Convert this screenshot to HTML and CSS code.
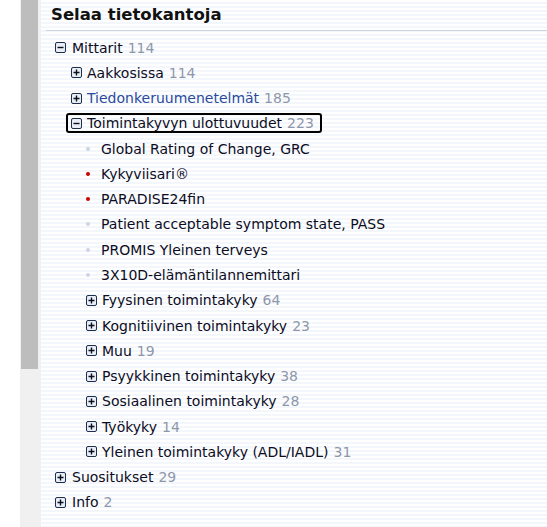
FILE: index.html
```html
<!DOCTYPE html>
<html lang="fi">
<head>
<meta charset="utf-8">
<title>Selaa tietokantoja</title>
<link rel="stylesheet" href="styles.css">
</head>
<body>
<div class="page">
  <div class="gutter"></div>
  <div class="rail"><div class="thumb"></div></div>
  <main class="panel">
    <div class="head"><h2 class="title">Selaa tietokantoja</h2></div>
    <ul class="tree">
      <li class="row lv0"><svg class="tog" viewBox="0 0 11 11"><rect x="0.5" y="0.5" width="10" height="10" rx="1.5"/><path d="M2.5 5.5h6"/></svg><span class="lbl">Mittarit</span><span class="cnt">114</span></li>
      <li class="row lv1"><svg class="tog" viewBox="0 0 11 11"><rect x="0.5" y="0.5" width="10" height="10" rx="1.5"/><path d="M2.5 5.5h6M5.5 2.5v6"/></svg><span class="lbl">Aakkosissa</span><span class="cnt">114</span></li>
      <li class="row lv1"><svg class="tog" viewBox="0 0 11 11"><rect x="0.5" y="0.5" width="10" height="10" rx="1.5"/><path d="M2.5 5.5h6M5.5 2.5v6"/></svg><span class="lbl visited">Tiedonkeruumenetelmät</span><span class="cnt">185</span></li>
      <li class="row lv1"><span class="focus"><svg class="tog" viewBox="0 0 11 11"><rect x="0.5" y="0.5" width="10" height="10" rx="1.5"/><path d="M2.5 5.5h6"/></svg><span class="lbl">Toimintakyvyn ulottuvuudet</span><span class="cnt">223</span></span></li>
      <li class="row lv2 leaf"><span class="dot"></span><span class="lbl">Global Rating of Change, GRC</span></li>
      <li class="row lv2 leaf"><span class="dot red"></span><span class="lbl">Kykyviisari®</span></li>
      <li class="row lv2 leaf"><span class="dot red"></span><span class="lbl">PARADISE24fin</span></li>
      <li class="row lv2 leaf"><span class="dot"></span><span class="lbl">Patient acceptable symptom state, PASS</span></li>
      <li class="row lv2 leaf"><span class="dot"></span><span class="lbl">PROMIS Yleinen terveys</span></li>
      <li class="row lv2 leaf"><span class="dot"></span><span class="lbl">3X10D-elämäntilannemittari</span></li>
      <li class="row lv2"><svg class="tog" viewBox="0 0 11 11"><rect x="0.5" y="0.5" width="10" height="10" rx="1.5"/><path d="M2.5 5.5h6M5.5 2.5v6"/></svg><span class="lbl">Fyysinen toimintakyky</span><span class="cnt">64</span></li>
      <li class="row lv2"><svg class="tog" viewBox="0 0 11 11"><rect x="0.5" y="0.5" width="10" height="10" rx="1.5"/><path d="M2.5 5.5h6M5.5 2.5v6"/></svg><span class="lbl">Kognitiivinen toimintakyky</span><span class="cnt">23</span></li>
      <li class="row lv2"><svg class="tog" viewBox="0 0 11 11"><rect x="0.5" y="0.5" width="10" height="10" rx="1.5"/><path d="M2.5 5.5h6M5.5 2.5v6"/></svg><span class="lbl">Muu</span><span class="cnt">19</span></li>
      <li class="row lv2"><svg class="tog" viewBox="0 0 11 11"><rect x="0.5" y="0.5" width="10" height="10" rx="1.5"/><path d="M2.5 5.5h6M5.5 2.5v6"/></svg><span class="lbl">Psyykkinen toimintakyky</span><span class="cnt">38</span></li>
      <li class="row lv2"><svg class="tog" viewBox="0 0 11 11"><rect x="0.5" y="0.5" width="10" height="10" rx="1.5"/><path d="M2.5 5.5h6M5.5 2.5v6"/></svg><span class="lbl">Sosiaalinen toimintakyky</span><span class="cnt">28</span></li>
      <li class="row lv2"><svg class="tog" viewBox="0 0 11 11"><rect x="0.5" y="0.5" width="10" height="10" rx="1.5"/><path d="M2.5 5.5h6M5.5 2.5v6"/></svg><span class="lbl">Työkyky</span><span class="cnt">14</span></li>
      <li class="row lv2"><svg class="tog" viewBox="0 0 11 11"><rect x="0.5" y="0.5" width="10" height="10" rx="1.5"/><path d="M2.5 5.5h6M5.5 2.5v6"/></svg><span class="lbl">Yleinen toimintakyky (ADL/IADL)</span><span class="cnt">31</span></li>
      <li class="row lv0"><svg class="tog" viewBox="0 0 11 11"><rect x="0.5" y="0.5" width="10" height="10" rx="1.5"/><path d="M2.5 5.5h6M5.5 2.5v6"/></svg><span class="lbl">Suositukset</span><span class="cnt">29</span></li>
      <li class="row lv0"><svg class="tog" viewBox="0 0 11 11"><rect x="0.5" y="0.5" width="10" height="10" rx="1.5"/><path d="M2.5 5.5h6M5.5 2.5v6"/></svg><span class="lbl">Info</span><span class="cnt">2</span></li>
    </ul>
  </main>
</div>
</body>
</html>
```
FILE: styles.css
```css
html, body {
  margin: 0;
  padding: 0;
  background: #ffffff;
}
body {
  font-family: "DejaVu Sans", Verdana, sans-serif;
  font-size: 14px;
  color: #0c0c24;
}
.page {
  display: flex;
  height: 527px;
  overflow: hidden;
}
.gutter {
  width: 20px;
  flex: none;
  background: #ffffff;
}
.rail {
  width: 21px;
  flex: none;
  background: #f0f0f0;
  padding: 0 3px 0 1px;
  box-sizing: border-box;
}
.thumb {
  height: 369px;
  background: #bdbdbd;
}
.panel {
  flex: 1;
  background: repeating-linear-gradient(to bottom, #ffffff 0, #ffffff 2px, #f3f7fc 2px, #f3f7fc 4px);
}
.head {
  margin-left: 5px;
  height: 30px;
  border-bottom: 1px solid #c9d4e6;
  display: flex;
  align-items: center;
}
.title {
  margin: 0 0 0 5px;
  font-size: 16.5px;
  font-weight: bold;
  color: #111111;
  position: relative;
  top: -1px;
}
.tree {
  list-style: none;
  margin: 4px 0 0 0;
  padding: 0;
}
.row {
  height: 25.28px;
  display: flex;
  align-items: center;
  white-space: nowrap;
}
.lv0 { padding-left: 14px; }
.lv1 { padding-left: 30px; }
.lv2 { padding-left: 45px; }
.tog {
  width: 11px;
  height: 11px;
  flex: none;
  margin-right: 6px;
}
.lv1 .tog, .lv2 .tog { margin-right: 5px; }
.tog rect {
  fill: #e9eef6;
  stroke: #1e2d4c;
  stroke-width: 1;
}
.tog path {
  stroke: #0a0f1e;
  stroke-width: 1.4;
  fill: none;
}
.leaf .dot {
  width: 4px;
  height: 4px;
  border-radius: 50%;
  background: #cdd4e2;
  margin: 0 11px 0 0;
  flex: none;
}
.dot.red { background: #cc0000; }
.lbl { color: #0c0c24; }
.lbl.visited { color: #2a4a9c; }
.cnt {
  color: #8e97aa;
  margin-left: 5px;
}
.focus {
  display: inline-flex;
  align-items: center;
  border: 2px solid #000000;
  border-radius: 3px;
  padding: 0 6px 0 3px;
  margin-left: -5px;
  height: 16px;
}
```
